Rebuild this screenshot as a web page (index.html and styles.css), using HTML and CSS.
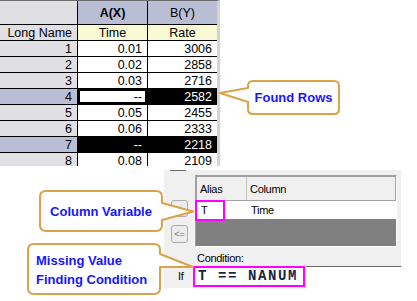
FILE: index.html
```html
<!DOCTYPE html>
<html>
<head>
<meta charset="utf-8">
<link rel="stylesheet" href="styles.css">
</head>
<body>
<div class="page">
  <div class="sheet">
    <div class="rh"></div><div class="ch bold">A(X)</div><div class="ch">B(Y)</div>
    <div class="rh">Long Name</div><div class="ln">Time</div><div class="ln">Rate</div>
    <div class="rh">1</div><div class="c">0.01</div><div class="c">3006</div>
    <div class="rh">2</div><div class="c">0.02</div><div class="c">2858</div>
    <div class="rh">3</div><div class="c">0.03</div><div class="c">2716</div>
    <div class="rh sel">4</div><div class="c act">--</div><div class="c blk">2582</div>
    <div class="rh">5</div><div class="c">0.05</div><div class="c">2455</div>
    <div class="rh">6</div><div class="c">0.06</div><div class="c">2333</div>
    <div class="rh sel">7</div><div class="c blk">--</div><div class="c blk">2218</div>
    <div class="rh">8</div><div class="c">0.08</div><div class="c">2109</div>
  </div>

  <div class="dlg">
    <div class="dlg-top">
      <div class="cap"></div>
      <div class="dlg-main">
        <div class="btns">
          <div class="btn">-&gt;</div>
          <div class="btn btn2">&lt;=</div>
        </div>
        <div class="rcol">
          <div class="list">
            <div class="lh"><div class="h1">Alias</div><div class="h2">Column</div></div>
            <div class="lr"><div class="d1">T</div><div class="d2">Time</div></div>
            <div class="lg"></div>
            <div class="mark"></div>
          </div>
          <div class="cond-label">Condition:</div>
        </div>
      </div>
    </div>
    <div class="dlg-bot">
      <div class="ifsec"><span class="if">If</span><div class="cond">T == NANUM</div></div>
      <div class="rest"></div>
    </div>
  </div>

  <svg class="callouts" width="417" height="301" viewBox="0 0 417 301">
    <path d="M253,81 H334 Q339,81 339,86 V109 Q339,114 334,114 H253 Q248,114 248,109 V102 L220,93 L248,88 V86 Q248,81 253,81 Z"/>
    <path d="M46,191 H156 Q162,191 162,197 V203 L193,211.5 L162,220 V225 Q162,231 156,231 H46 Q40,231 40,225 V197 Q40,191 46,191 Z"/>
    <path d="M34,244 H154 Q160,244 160,250 V254 L193,267 H160 V288 Q160,294 154,294 H34 Q28,294 28,288 V250 Q28,244 34,244 Z"/>
  </svg>
  <div class="co co1">Found Rows</div>
  <div class="co co2">Column Variable</div>
  <div class="co co3">Missing Value<br>Finding Condition</div>
</div>
</body>
</html>
```

FILE: styles.css
```css
html, body {
  margin: 0;
  padding: 0;
  background: #fff;
}
.page {
  position: relative;
  width: 417px;
  height: 301px;
  overflow: hidden;
  font-family: "Liberation Sans", Arial, sans-serif;
  color: #000;
}
.sheet {
  display: grid;
  grid-template-columns: 77px 69px 69px;
  grid-template-rows: 23px repeat(9, 15px);
  gap: 1px;
  background: #000;
  border-top: 1px solid #6e6e6e;
  border-right: 3px solid #d4d4d4;
  width: 220px;
  height: 166px;
  box-sizing: border-box;
  overflow: hidden;
  font-size: 12.5px;
}
.sheet > div {
  display: flex;
  align-items: center;
  white-space: nowrap;
  overflow: hidden;
}
.rh {
  background: #e0dfe4;
  justify-content: flex-end;
  padding-right: 5px;
}
.rh.sel {
  background: #babed5;
}
.ch {
  background: #babed5;
  justify-content: center;
}
.bold {
  font-weight: bold;
}
.ln {
  background: #f9f9d3;
  justify-content: center;
}
.c {
  background: #fff;
  justify-content: flex-end;
  padding-right: 5px;
}
.c.act {
  border: 2px solid #000;
  padding-right: 3px;
}
.c.blk {
  background: #000;
  color: #fff;
}

/* dialog */
.dlg {
  margin: 4px 0 0 164px;
  width: 237px;
  font-size: 11px;
  letter-spacing: -0.3px;
}
.dlg-top {
  background: #f0f0f0;
  height: 96px;
  box-sizing: border-box;
}
.cap {
  height: 1px;
  width: 16px;
  margin-left: 6px;
  background: #6a6a6a;
}
.dlg-main {
  display: flex;
  margin-top: 4px;
  gap: 7px;
  padding-left: 7px;
}
.btns {
  display: flex;
  flex-direction: column;
  gap: 8px;
  padding-top: 25px;
}
.btn {
  width: 17px;
  height: 17px;
  box-sizing: border-box;
  border: 1px solid #adadad;
  border-radius: 3px;
  background: #ececec;
  color: #707070;
  font-size: 9px;
  letter-spacing: 0;
  display: flex;
  align-items: center;
  justify-content: center;
}
.btn2 {
  height: 18px;
}
.list {
  position: relative;
  width: 202px;
  box-sizing: border-box;
  border-top: 1px solid #a0a0a0;
  border-left: 1px solid #a0a0a0;
  border-right: 1px solid #fff;
  border-bottom: 1px solid #fff;
}
.lh {
  display: flex;
  height: 25px;
  box-sizing: border-box;
  border: 1px solid #a0a0a0;
  background: #f0f0f0;
  align-items: stretch;
}
.h1 {
  width: 50px;
  border-right: 1px solid #c4c4c4;
  padding-left: 3px;
  box-sizing: border-box;
  display: flex;
  align-items: center;
}
.h2 {
  padding-left: 3px;
  display: flex;
  align-items: center;
}
.lr {
  display: flex;
  height: 18px;
  background: #fff;
  align-items: center;
}
.d1 {
  width: 51px;
  padding-left: 5px;
  box-sizing: border-box;
}
.d2 {
  padding-left: 4px;
}
.lg {
  height: 27px;
  background: #808080;
}
.mark {
  position: absolute;
  left: -1px;
  top: 24px;
  width: 30px;
  height: 21px;
  box-sizing: border-box;
  border: 2px solid #ff00ff;
}
.cond-label {
  margin-top: 5px;
  padding-left: 2px;
  line-height: 12px;
}
.dlg-bot {
  display: flex;
  height: 22px;
}
.ifsec {
  width: 142px;
  background: #f0f0f0;
  display: flex;
  align-items: flex-start;
}
.if {
  width: 15px;
  padding-left: 14px;
  margin-top: 4px;
  line-height: 12px;
}
.cond {
  width: 112px;
  height: 21px;
  box-sizing: border-box;
  border: 2px solid #ff00ff;
  background: #fff;
  font-family: "Liberation Mono", monospace;
  font-weight: bold;
  font-size: 14px;
  letter-spacing: 1.6px;
  color: #1b2444;
  padding-left: 3px;
  line-height: 17px;
  white-space: pre;
}
.rest {
  flex: 1;
  border-top: 1px solid #696969;
}

/* callouts */
.callouts {
  position: absolute;
  left: 0;
  top: 0;
}
.callouts path {
  fill: #fff;
  stroke: #dca24a;
  stroke-width: 2;
  stroke-linejoin: round;
}
.co {
  position: absolute;
  color: #1616ff;
  font-weight: bold;
  font-size: 13px;
  white-space: nowrap;
}
.co1 {
  left: 248px;
  top: 81px;
  width: 91px;
  height: 33px;
  display: flex;
  align-items: center;
  justify-content: center;
}
.co2 {
  left: 40px;
  top: 191px;
  width: 122px;
  height: 40px;
  display: flex;
  align-items: center;
  justify-content: center;
}
.co3 {
  left: 36px;
  top: 251px;
  line-height: 19px;
}
```
